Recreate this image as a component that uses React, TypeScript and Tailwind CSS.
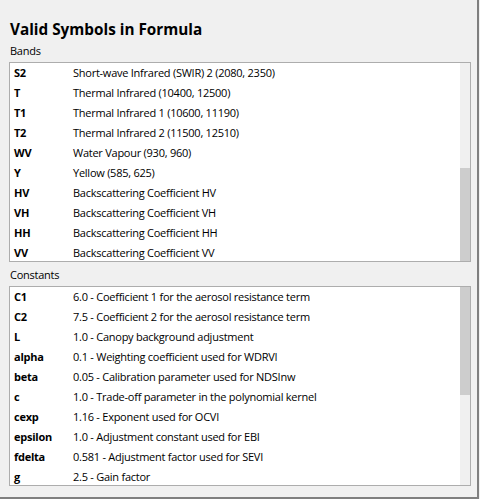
const bands: [string, string][] = [
  ["S2", "Short-wave Infrared (SWIR) 2 (2080, 2350)"],
  ["T", "Thermal Infrared (10400, 12500)"],
  ["T1", "Thermal Infrared 1 (10600, 11190)"],
  ["T2", "Thermal Infrared 2 (11500, 12510)"],
  ["WV", "Water Vapour (930, 960)"],
  ["Y", "Yellow (585, 625)"],
  ["HV", "Backscattering Coefficient HV"],
  ["VH", "Backscattering Coefficient VH"],
  ["HH", "Backscattering Coefficient HH"],
  ["VV", "Backscattering Coefficient VV"],
]

const constants: [string, string][] = [
  ["C1", "6.0 - Coefficient 1 for the aerosol resistance term"],
  ["C2", "7.5 - Coefficient 2 for the aerosol resistance term"],
  ["L", "1.0 - Canopy background adjustment"],
  ["alpha", "0.1 - Weighting coefficient used for WDRVI"],
  ["beta", "0.05 - Calibration parameter used for NDSInw"],
  ["c", "1.0 - Trade-off parameter in the polynomial kernel"],
  ["cexp", "1.16 - Exponent used for OCVI"],
  ["epsilon", "1.0 - Adjustment constant used for EBI"],
  ["fdelta", "0.581 - Adjustment factor used for SEVI"],
  ["g", "2.5 - Gain factor"],
]

/** Listbox with two columns and a thin, non-interactive scrollbar. */
function SymbolList({
  rows,
  thumbTop,
  thumbHeight,
}: {
  rows: [string, string][]
  thumbTop: number
  thumbHeight: number
}) {
  return (
    <div className="flex h-[200px] w-[462px] shrink-0 border border-[#adadad] bg-white">
      <div className="flex-1 overflow-hidden">
        {rows.map(([sym, desc]) => (
          <div
            key={sym}
            className="flex h-[20px] items-center pl-[4px] text-[11px] tracking-[-0.25px] text-black"
          >
            <span className="w-[59px] shrink-0 font-bold">{sym}</span>
            <span className="whitespace-nowrap">{desc}</span>
          </div>
        ))}
      </div>
      <div className="flex w-[10px] flex-col bg-[#f0f0f0]">
        <div className="bg-[#cdcdcd]" style={{ marginTop: thumbTop, height: thumbHeight }} />
      </div>
    </div>
  )
}

export default function App() {
  return (
    <div className="h-[499px] w-[480px] bg-[#f0f0f0] font-['Open_Sans',sans-serif]">
      <div className="flex h-[499px] w-[479px] flex-col border-r-2 border-b-2 border-[#7f7f7f] pt-[19px] pl-[9px]">
        <div className="h-[20px] pl-[1px] text-[15.3px] leading-[20px] font-bold text-black">
          Valid Symbols in Formula
        </div>
        <div className="mt-[4px] h-[16px] pl-[1px] text-[11px] leading-[16px] tracking-[-0.25px] text-black">
          Bands
        </div>
        <div className="mt-[3px]">
          <SymbolList rows={bands} thumbTop={105} thumbHeight={93} />
        </div>
        <div className="mt-[5px] h-[16px] pl-[1px] text-[11px] leading-[16px] tracking-[-0.25px] text-black">
          Constants
        </div>
        <div className="mt-[3px]">
          <SymbolList rows={constants} thumbTop={0} thumbHeight={108} />
        </div>
      </div>
    </div>
  )
}
